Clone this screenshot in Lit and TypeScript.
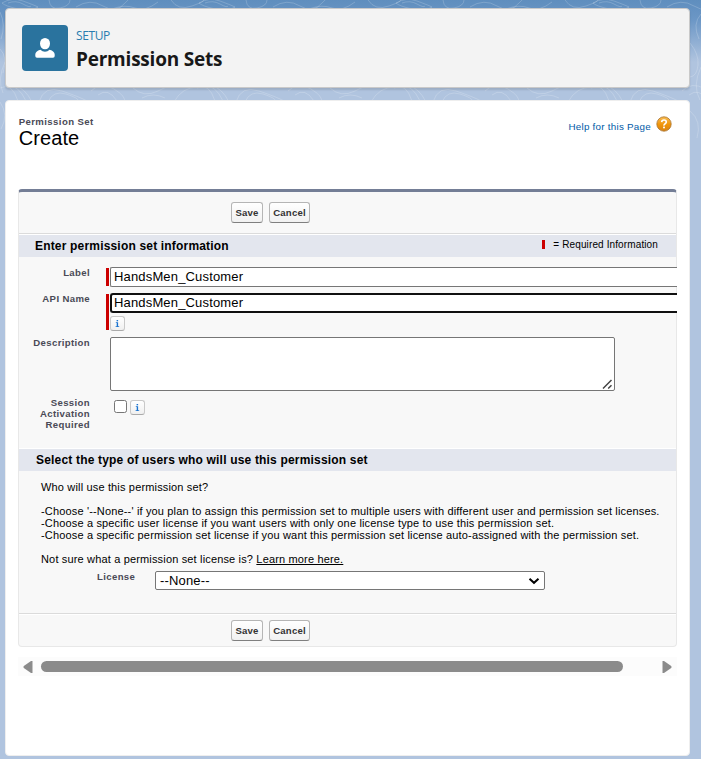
import { LitElement, html, css, svg } from "lit";
import { customElement, property } from "lit/decorators.js";

@customElement("action-buttons")
class ActionButtons extends LitElement {
  static styles = css`
    :host { display: flex; gap: 6px; padding-left: 212px; }
    button {
      box-sizing: border-box; height: 21px; padding: 0; margin: 0;
      border: 1px solid #b5b5b5; border-bottom-color: #7f7f7f; border-radius: 3px;
      background: linear-gradient(#ffffff, #f1f1f1);
      font: bold 9.6px/18px "Liberation Sans", Arial, sans-serif; color: #333; white-space: nowrap;
    }
    .save { width: 32px; letter-spacing: 0.1px; }
    .cancel { width: 41px; letter-spacing: 0.2px; }
  `;
  render() {
    return html`<button class="save">Save</button><button class="cancel">Cancel</button>`;
  }
}

@customElement("info-button")
class InfoButton extends LitElement {
  static styles = css`
    :host {
      display: block; box-sizing: border-box; width: 15px; height: 15px;
      border: 1px solid #c9c9c9; border-bottom-color: #aaa; border-radius: 3px;
      background: linear-gradient(#fff, #f0f0f0);
    }
    svg { display: block; width: 13px; height: 13px; }
  `;
  render() {
    return html`<svg viewBox="0 0 13 13" fill="#1a73d0">
      <rect x="5.6" y="3" width="1.5" height="1.3"></rect>
      <path d="M4.8 5.2H7.1V9.2H8.2V10H4.6V9.2H5.7V6H4.8Z"></path>
    </svg>`;
  }
}

@customElement("section-bar")
class SectionBar extends LitElement {
  @property({ type: Boolean }) legend = false;
  static styles = css`
    :host {
      display: flex; align-items: center; justify-content: space-between; box-sizing: border-box;
      height: 23px; border-top: 1px solid #fff; background: #e3e6ee; padding: 0 18px 0 16px;
      font: bold 12px/22px "Liberation Sans", Arial, sans-serif; color: #000; letter-spacing: 0.18px;
    }
    .req { display: flex; align-items: center; gap: 8px; font-size: 10px; font-weight: normal; line-height: 19px; padding-bottom: 3px; letter-spacing: 0.12px; }
    .mark { width: 3px; height: 9px; background: #c00; }
  `;
  render() {
    return html`<slot></slot>${this.legend
      ? html`<div class="req"><span class="mark"></span><span>= Required Information</span></div>`
      : ""}`;
  }
}

@customElement("app-root")
class AppRoot extends LitElement {
  static styles = css`
    :host {
      display: block; position: relative; box-sizing: border-box; width: 701px; height: 759px; overflow: hidden;
      background: linear-gradient(#5f8ebe 0, #6c97c6 20px, #b0c4df 62px, #b0c4df 100%);
      font-family: "Liberation Sans", Arial, sans-serif; color: #000;
    }
    * { box-sizing: border-box; }
    .contours { position: absolute; left: 0; top: 0; width: 701px; height: 200px; }
    .page { position: relative; display: flex; flex-direction: column; gap: 12px; padding: 8px 11px 3px 5px; height: 759px; }
    .top {
      display: flex; flex: none; height: 80px; padding: 16px 16px 0; background: #f3f3f3;
      border: 1px solid #c9c9c9; border-radius: 4px; box-shadow: 0 2px 2px rgba(0,0,0,.12);
    }
    .badge { width: 46px; height: 46px; flex: none; border-radius: 4px; background: #2a739e; }
    .badge svg { display: block; width: 46px; height: 46px; }
    .heads { padding-left: 8px; font-family: "Open Sans", "Noto Sans", sans-serif; white-space: nowrap; }
    .setup { font-size: 12px; line-height: 18px; height: 21px; padding-top: 2px; color: #2a7cb0; letter-spacing: -0.4px; }
    .title { font-size: 19px; line-height: 26px; font-weight: 700; color: #181818; letter-spacing: -0.22px; }
    .card { flex: 1; background: #fff; border: 1px solid #eee; border-radius: 4px; padding: 15px 12px 0; }
    .intro { display: flex; justify-content: space-between; height: 73px; padding-left: 0.7px; }
    .kind { font-size: 9.6px; line-height: 12px; font-weight: bold; color: #4a4a56; letter-spacing: 0.4px; }
    .create { font-size: 20px; line-height: 20px; letter-spacing: 0.1px; }
    .help { display: flex; align-items: flex-start; gap: 5px; padding-right: 5px; font-size: 9.8px; color: #015ba7; letter-spacing: .26px; }
    .help span { line-height: 12px; padding-top: 5px; }
    .help svg { display: block; width: 16px; height: 16px; }
    .panel {
      height: 458px; background: #f8f8f8; border: 1px solid #e8e8e8; border-top: 3px solid #747e96;
      border-radius: 4px; display: flex; flex-direction: column;
    }
    .bar { height: 42px; flex: none; padding-top: 10px; border-bottom: 1px solid #dbdbdb; }
    .fields { height: 191px; flex: none; padding-top: 10px; display: flex; flex-direction: column; }
    .row { display: grid; grid-template-columns: 71px 16px 3px 1px 1fr; }
    .name { font-size: 9.6px; line-height: 11px; font-weight: bold; text-align: right; color: #4a4a56; letter-spacing: .36px; }
    .row .mark { background: #c00; }
    .r1 { height: 26px; } .r2 { height: 44px; } .r3 { height: 60px; } .r4 { height: 50px; }
    .r1 .mark { height: 18px; margin-top: 1px; }
    .r2 .mark { height: 36px; margin-top: 1px; }
    input[type="text"] {
      display: block; width: 567px; height: 20px; margin: 0 -1px 0 0; border: 1px solid #767676; border-right: 0; border-radius: 2px 0 0 2px;
      padding: 0 3px 1px; font: 13px/16px "Liberation Sans", Arial, sans-serif; background: #fff; color: #000; outline: none; letter-spacing: 0.16px;
    }
    .r2 input[type="text"] { border: 2px solid #101010; border-right: 0; padding: 0 2px 1px; border-radius: 3px 0 0 3px; }
    .r2 info-button { margin-top: 3px; }
    .area { width: 505px; height: 54px; background: #fff; border: 1px solid #767676; border-radius: 2px; display: flex; align-items: flex-end; justify-content: flex-end; padding: 0 1px 0 0; }
    .area svg { width: 11px; height: 11px; }
    .check { display: flex; align-items: flex-start; gap: 3px; padding: 3px 0 0 4px; }
    .box { appearance: none; width: 13px; height: 13px; margin: 0; border: 1px solid #767676; border-radius: 2.5px; background: #fff; }
    .lower { flex: 1; padding: 10px 0 0 22px; }
    .copy { margin: 0; font-size: 11px; line-height: 12px; white-space: nowrap; letter-spacing: 0.16px; }
    .copy div { height: 12px; }
    .copy .gap { height: 24px; }
    .copy a { color: #000; text-decoration: underline; }
    .license { display: flex; padding-left: 56px; gap: 20px; margin-top: 6px; }
    .license .name { width: 38px; }
    .select { width: 390px; height: 19px; border: 1px solid #767676; border-radius: 2px; background: #fff; display: flex; justify-content: space-between; align-items: center; padding: 0 4px 0 4px; font-size: 13px; line-height: 17px; letter-spacing: 0.16px; }
    .select svg { width: 12px; height: 8px; }
    .foot { height: 33px; flex: none; border-top: 1px solid #dbdbdb; box-shadow: inset 0 1px #fff; padding-top: 6px; }
    .scroll { display: flex; align-items: center; height: 19px; margin-top: 10px; padding: 0 5px; background: #fcfcfc; }
    .scroll svg { width: 10px; height: 12px; flex: none; }
    .thumb { width: 582px; height: 11px; margin: 0 39px 0 8px; border-radius: 6px; background: #8b8b8b; }
  `;

  private contours() {
    const tile = svg`
      <path d="M2 3Q12 -3 23 1T38 7Q31 12 18 9T2 3ZM8 3Q16 0 23 4T31 6M49 0Q50 10 60 8T70 0M76 7Q90 -2 103 6T125 3T143 -1M112 9Q125 4 135 8T158 2M171 0Q178 11 192 6T203 0"></path>
      <path d="M0 88Q12 82 18 101M7 86Q18 84 26 101M15 86Q25 88 32 102M39 102Q44 85 62 91T87 101M48 102Q53 90 66 94T78 101M91 91Q101 81 114 89T124 102M98 95Q108 87 117 101M133 88Q144 98 158 91T170 86M142 98Q153 92 165 98M174 102Q182 87 198 87"></path>`;
    return html`<svg class="contours" viewBox="0 0 701 200" fill="none" stroke="#fff" stroke-opacity=".19" stroke-width="1">
      ${[0, 197, 394, 591].map((x) => svg`<g transform="translate(${x} 0)">${tile}</g>`)}
      <path d="M0 12Q6 25 1 39M0 49Q8 57 3 73M5 62Q-3 79 3 93M0 102Q9 115 1 129M701 14Q692 24 699 39M690 43Q699 54 698 65T690 77M701 67Q692 86 700 100M690 111Q702 121 697 138"></path>
    </svg>`;
  }

  render() {
    return html`
      ${this.contours()}
      <div class="page">
        <header class="top">
          <div class="badge">
            <svg viewBox="0 0 46 46" fill="#fff">
              <ellipse cx="23" cy="18.6" rx="5" ry="5.7"></ellipse>
              <path d="M18.4 24.8Q20.4 26.8 23 26.8T27.6 24.8C30.9 25.8 32.7 27.4 32.7 29.6V31Q32.7 32.7 31 32.7H15Q13.3 32.7 13.3 31V29.6C13.3 27.4 15.1 25.8 18.4 24.8Z"></path>
            </svg>
          </div>
          <div class="heads"><div class="setup">SETUP</div><div class="title">Permission Sets</div></div>
        </header>
        <main class="card">
          <div class="intro">
            <div><div class="kind">Permission Set</div><div class="create">Create</div></div>
            <div class="help">
              <span>Help for this Page</span>
              <svg viewBox="0 0 16 16">
                <defs><linearGradient id="o" x2="0" y2="1"><stop stop-color="#f8bd55"></stop><stop offset=".55" stop-color="#f09407"></stop><stop offset="1" stop-color="#d78313"></stop></linearGradient></defs>
                <circle cx="8" cy="8" r="7.2" fill="url(#o)" stroke="#a87431" stroke-width=".8"></circle>
                <path d="M5.7 6.1Q5.8 4 8 4T10.3 6Q10.3 7 9.1 7.7T8 9.6" fill="none" stroke="#fff" stroke-width="1.6"></path>
                <rect x="7.1" y="10.6" width="1.8" height="1.7" fill="#fff"></rect>
              </svg>
            </div>
          </div>
          <section class="panel">
            <div class="bar"><action-buttons></action-buttons></div>
            <section-bar legend>Enter permission set information</section-bar>
            <div class="fields">
              <div class="row r1"><div class="name">Label</div><i></i><div class="mark"></div><i></i><input type="text" .value=${"HandsMen_Customer"} /></div>
              <div class="row r2"><div class="name">API Name</div><i></i><div class="mark"></div><i></i><div><input type="text" .value=${"HandsMen_Customer"} /><info-button></info-button></div></div>
              <div class="row r3"><div class="name">Description</div><i></i><i></i><i></i>
                <div class="area"><svg viewBox="0 0 11 11" stroke="#444" stroke-width="1.5" fill="none"><path d="M1 9.5L9.5 1M6.2 9.5L9.5 6.2"></path></svg></div>
              </div>
              <div class="row r4"><div class="name">Session<br />Activation<br />Required</div><i></i><i></i><i></i>
                <div class="check"><input class="box" type="checkbox" /><info-button></info-button></div>
              </div>
            </div>
            <section-bar><span style="padding-left:1px">Select the type of users who will use this permission set</span></section-bar>
            <div class="lower">
              <div class="copy">
                <div class="gap">Who will use this permission set?</div>
                <div>-Choose '--None--' if you plan to assign this permission set to multiple users with different user and permission set licenses.</div>
                <div>-Choose a specific user license if you want users with only one license type to use this permission set.</div>
                <div class="gap">-Choose a specific permission set license if you want this permission set license auto-assigned with the permission set.</div>
                <div>Not sure what a permission set license is? <a>Learn more here.</a></div>
              </div>
              <div class="license">
                <div class="name">License</div>
                <div class="select"><span>--None--</span><svg viewBox="0 0 12 8" fill="none" stroke="#000" stroke-width="2"><path d="M1.5 1.8L6 5.8L10.5 1.8"></path></svg></div>
              </div>
            </div>
            <div class="foot"><action-buttons></action-buttons></div>
          </section>
          <div class="scroll">
            <svg viewBox="0 0 10 12" fill="#8b8b8b"><path d="M9.5 0V12H8L.8 7Q0 6 .8 5L8 0Z"></path></svg>
            <div class="thumb"></div>
            <svg viewBox="0 0 10 12" fill="#8b8b8b"><path d="M.5 0V12H2L9.2 7Q10 6 9.2 5L2 0Z"></path></svg>
          </div>
        </main>
      </div>`;
  }
}
